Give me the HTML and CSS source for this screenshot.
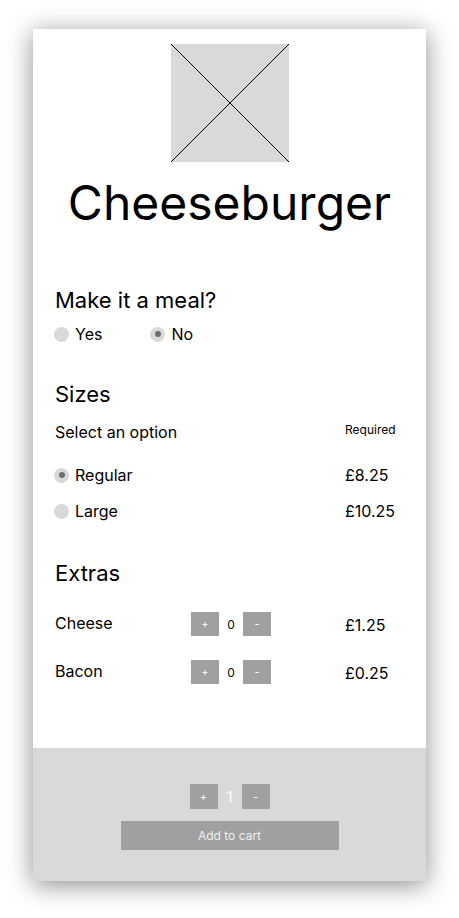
FILE: index.html
```html
<!DOCTYPE html>
<html lang="en">
<head>
    <meta charset="UTF-8">
    <meta name="viewport" content="width=device-width, initial-scale=1.0">
    <title>Cheeseburger</title>
    <link rel="stylesheet" href="styles.css">
</head>
<body>
    <div class="item-card">
        <div class="hero">
            <svg class="placeholder" width="118" height="118" viewBox="0 0 118 118">
                <rect width="118" height="118" fill="#d9d9d9"/>
                <line x1="0" y1="0" x2="118" y2="118" stroke="#000" stroke-width="1"/>
                <line x1="118" y1="0" x2="0" y2="118" stroke="#000" stroke-width="1"/>
            </svg>
            <h1>Cheeseburger</h1>
        </div>

        <div class="options">
            <h2 class="meal-title">Make it a meal?</h2>
            <div class="meal-choice">
                <label class="radio"><span class="dot"></span>Yes</label>
                <label class="radio"><span class="dot checked"></span>No</label>
            </div>

            <h2 class="section-title">Sizes</h2>
            <div class="select-row">
                <span>Select an option</span>
                <span class="required">Required</span>
            </div>
            <div class="size-row first">
                <label class="radio"><span class="dot checked"></span>Regular</label>
                <span class="price">£8.25</span>
            </div>
            <div class="size-row">
                <label class="radio"><span class="dot"></span>Large</label>
                <span class="price">£10.25</span>
            </div>

            <h2 class="section-title extras">Extras</h2>
            <div class="extra-row first">
                <span class="extra-name">Cheese</span>
                <div class="stepper">
                    <button class="step-btn">+</button>
                    <span class="qty">0</span>
                    <button class="step-btn">-</button>
                </div>
                <span class="price">£1.25</span>
            </div>
            <div class="extra-row">
                <span class="extra-name">Bacon</span>
                <div class="stepper">
                    <button class="step-btn">+</button>
                    <span class="qty">0</span>
                    <button class="step-btn">-</button>
                </div>
                <span class="price">£0.25</span>
            </div>
        </div>

        <div class="cart-bar">
            <div class="stepper">
                <button class="step-btn">+</button>
                <span class="qty light">1</span>
                <button class="step-btn">-</button>
            </div>
            <button class="add-btn">Add to cart</button>
        </div>
    </div>
</body>
</html>
```

FILE: styles.css
```css
body { margin: 0; background: #fff; font-family: Inter, "Noto Sans", sans-serif; color: #000; }

.item-card { width: 393px; margin: 29px 0 30px 33px; background: #fff; box-shadow: 0 4px 24px rgba(0,0,0,0.45); }

.hero { padding-top: 15px; text-align: center; }
.placeholder { display: block; margin: 0 auto; }
.hero h1 { margin: 12px 0 0 0; font-size: 48px; font-weight: 400; line-height: 58px; }

.options { padding: 55px 31px 64px 21px; }
.options h2 { margin: 0 0 0 1px; font-size: 22px; font-weight: 400; line-height: 27px; }
.section-title { margin-top: 37px !important; }
.section-title.extras { margin-top: 39px !important; }

.radio { display: flex; align-items: center; gap: 6px; font-size: 16px; line-height: 20px; }
.dot { width: 15px; height: 15px; border-radius: 50%; background: #d9d9d9; display: flex; align-items: center; justify-content: center; }
.dot.checked::after { content: ""; width: 6px; height: 6px; border-radius: 50%; background: #6e6e6e; }

.meal-choice { display: flex; gap: 48px; margin-top: 10px; }

.select-row { display: flex; justify-content: space-between; align-items: flex-start; margin: 14px 0 0 1px; font-size: 16px; line-height: 20px; }
.required { width: 50px; font-size: 12px; line-height: 16px; }

.size-row { display: flex; justify-content: space-between; align-items: center; margin-top: 16px; }
.size-row.first { margin-top: 23px; }
.price { width: 50px; font-size: 16px; line-height: 20px; }

.extra-row { display: flex; align-items: center; margin-top: 24px; height: 24px; }
.extra-row.first { margin-top: 25px; }
.extra-name { width: 136px; padding-left: 1px; font-size: 16px; line-height: 20px; margin-top: -2px; }
.extra-row .stepper { flex: 1; }
.extra-row .price { margin-top: 2px; }

.stepper { display: flex; align-items: center; }
.step-btn { width: 28px; height: 24px; border: none; padding: 0; background: #a0a0a0; color: #fff; font-family: inherit; font-size: 11px; }
.qty { width: 24px; text-align: center; font-size: 12px; }
.qty.light { color: #fff; font-size: 14px; }

.cart-bar { background: #d9d9d9; padding: 36px 0 31px; display: flex; flex-direction: column; align-items: center; gap: 12px; }
.cart-bar .step-btn { height: 25px; }
.add-btn { width: 218px; height: 29px; border: none; background: #a0a0a0; color: #f0f0f0; font-family: inherit; font-size: 12px; }
```
